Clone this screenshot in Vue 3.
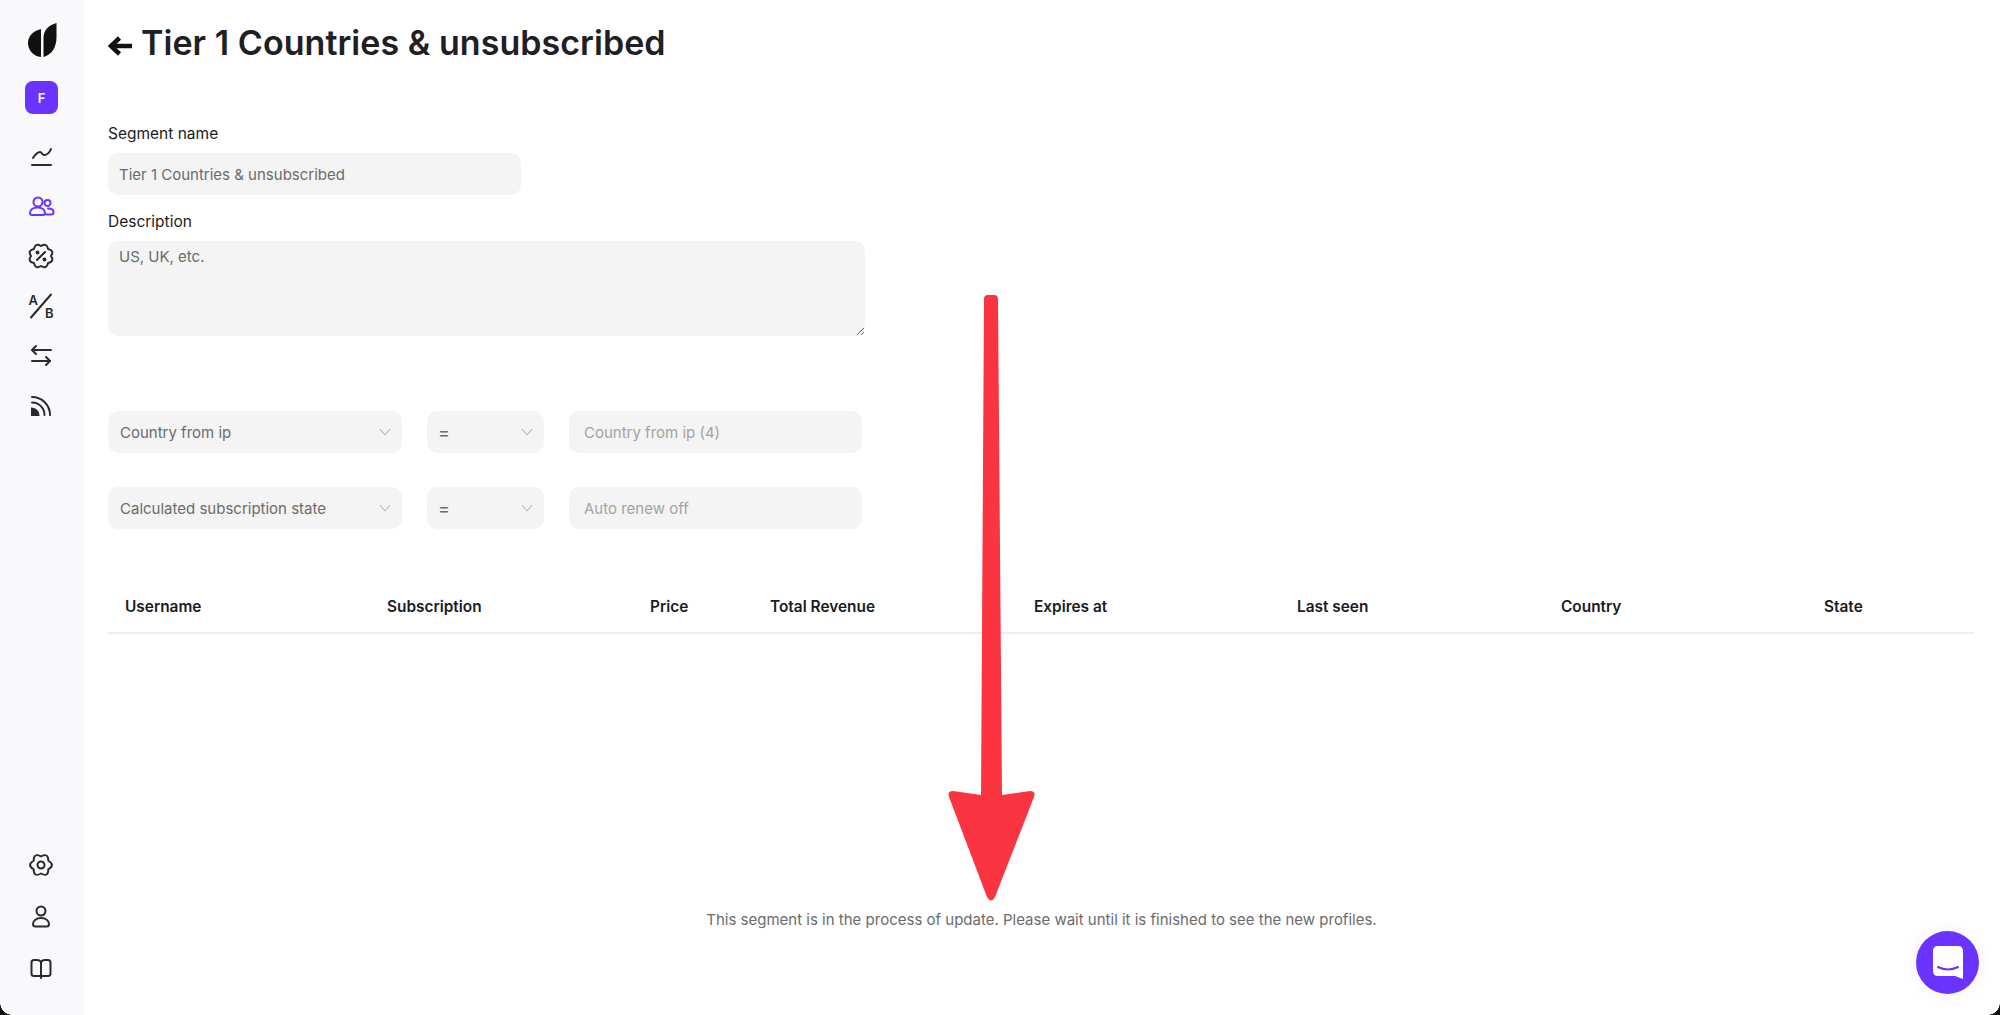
<template>
  <div class="app">
    <aside class="sidebar">
      <svg class="logo" width="29" height="34" viewBox="0 0 29 34">
        <path d="M13 6C5 8 0 13 0 20c0 7 5 13 13 14z" fill="#111" />
        <path d="M15.500 34V15C15.500 7 21 2 28.500 0v14c0 11-5.500 18-13 20z" fill="#111" />
      </svg>
      <div class="badge">F</div>
      <nav class="nav">
        <a v-for="item in topNav" :key="item.name" class="nav__item" :class="{ 'nav__item--active': item.active }">
          <svg width="28" height="28" viewBox="0 0 28 28" fill="none" stroke="currentColor" stroke-width="2" stroke-linecap="round" stroke-linejoin="round">
            <path v-for="(d, i) in item.paths" :key="i" :d="d" />
            <path v-if="item.solid" :d="item.solid" fill="currentColor" stroke="none" />
            <text v-for="t in item.labels" :key="t.c" :x="t.x" :y="t.y" class="nav__letter">{{ t.c }}</text>
          </svg>
        </a>
      </nav>
      <nav class="nav nav--bottom">
        <a v-for="item in bottomNav" :key="item.name" class="nav__item">
          <svg width="28" height="28" viewBox="0 0 28 28" fill="none" stroke="currentColor" stroke-width="2" stroke-linecap="round" stroke-linejoin="round">
            <path v-for="(d, i) in item.paths" :key="i" :d="d" />
          </svg>
        </a>
      </nav>
    </aside>

    <main class="main">
      <h1 class="title">
        <svg class="title__back" width="24" height="20" viewBox="0 0 24 20" fill="none" stroke="#111" stroke-width="4.500" stroke-linejoin="miter">
          <path d="M11.500 2L3 10l8.500 8" />
          <path d="M3.500 10H24" />
        </svg>
        <span>Tier 1 Countries &amp; unsubscribed</span>
      </h1>

      <label class="label label--name">Segment name</label>
      <input class="field field--name" value="Tier 1 Countries & unsubscribed" readonly />

      <label class="label label--desc">Description</label>
      <textarea class="field field--desc" readonly>US, UK, etc.</textarea>

      <div class="rules">
        <div v-for="rule in rules" :key="rule.field" class="rule">
          <div class="field field--select rule__field">
            <span>{{ rule.field }}</span>
            <svg width="12" height="8" viewBox="0 0 12 8" fill="none" stroke="#a9a9a9" stroke-width="1"><path d="M1 1l5 6 5-6" /></svg>
          </div>
          <div class="field field--select rule__op">
            <span class="rule__eq">=</span>
            <svg width="12" height="8" viewBox="0 0 12 8" fill="none" stroke="#a9a9a9" stroke-width="1"><path d="M1 1l5 6 5-6" /></svg>
          </div>
          <div class="field rule__value">{{ rule.value }}</div>
        </div>
      </div>

      <div class="table-head">
        <span v-for="col in columns" :key="col">{{ col }}</span>
      </div>

      <p class="message">This segment is in the process of update. Please wait until it is finished to see the new profiles.</p>
    </main>

    <!-- red annotation arrow drawn over the page -->
    <svg class="arrow" width="90" height="610" viewBox="0 0 90 610">
      <path
        d="M36 5Q36 1 40 1H46Q50 1 50 5L54 501L82 497Q88 497 86 503L47 603Q43 610 39 603L1 503Q-1 497 5 497L33 501Z"
        fill="#fb3441"
      />
    </svg>

    <button class="chat">
      <svg width="30" height="33" viewBox="0 0 30 33">
        <path d="M5 0H25Q30 0 30 5V33L22 30H5Q0 30 0 25V5Q0 0 5 0Z" fill="#fff" />
        <path d="M5 21Q15 26 25 21" fill="none" stroke="#6b33ff" stroke-width="2" stroke-linecap="round" />
      </svg>
    </button>

    <i class="corner corner--left" />
    <i class="corner corner--right" />
  </div>
</template>

<script setup>
// scalloped outline, used for the offers badge and the settings gear
function scallop(n, valley, ctrl, cx = 14, cy = 14) {
  const pt = (r, a) => `${(cx + r * Math.cos(a)).toFixed(2)} ${(cy + r * Math.sin(a)).toFixed(2)}`
  const step = (Math.PI * 2) / n
  let d = `M${pt(valley, -Math.PI / 2)}`
  for (let i = 0; i < n; i++) {
    const a = -Math.PI / 2 + i * step
    d += `Q${pt(ctrl, a + step / 2)} ${pt(valley, a + step)}`
  }
  return d + 'Z'
}

const topNav = [
  { name: 'analytics', paths: ['M5 23H24', 'M6 16C8 13 11 10 13 10S15 13 17 13 22 12 24 7'] },
  {
    name: 'users',
    active: true,
    paths: [
      'M11 14.500a4.500 4.500 0 1 0 0-9 4.500 4.500 0 0 0 0 9z',
      'M3 21c0-3.500 3.500-5.500 7.500-5.500s7.500 2 7.500 5.500c0 1.500-1 2-2 2H5c-1 0-2-.5-2-2z',
      'M20.500 14a3 3 0 1 0 0-6 3 3 0 0 0 0 6z',
      'M21 16.500c3 0 5.500 1 5.500 3.500 0 1.500-1 2.500-2 2.500H19',
    ],
  },
  {
    name: 'offers',
    paths: [scallop(8, 10, 14.800), 'M18 10l-8 8'],
    solid: 'M10.500 8.500a2 2 0 1 0 0 4 2 2 0 0 0 0-4zM17.500 15.500a2 2 0 1 0 0 4 2 2 0 0 0 0-4z',
  },
  {
    name: 'ab tests',
    paths: ['M24 2.500L4 25.500'],
    labels: [{ c: 'A', x: 1.500, y: 12.500 }, { c: 'B', x: 18, y: 26 }],
  },
  { name: 'transfers', paths: ['M9 4L5 8l4 4', 'M5.500 8H24', 'M19 15l4 4-4 4', 'M23 19H5'] },
  {
    name: 'feeds',
    paths: ['M5 5c10 0 18 8 18 18', 'M5 10.500c7 0 12.500 5.500 12.500 12.500'],
    solid: 'M4 15.500c5 0 8.500 3.500 8.500 8.500H4z',
  },
]

const bottomNav = [
  {
    name: 'settings',
    paths: ['M14 17.500a3.500 3.500 0 1 0 0-7 3.500 3.500 0 0 0 0 7z', scallop(6, 8.500, 14.600)],
  },
  {
    name: 'profile',
    paths: [
      'M14 12.500a4.500 4.500 0 1 0 0-9 4.500 4.500 0 0 0 0 9z',
      'M6 21c0-3.500 3.500-6 8-6s8 2.500 8 6c0 2-1.500 2.500-2.500 2.500h-11C7.500 23.500 6 23 6 21z',
    ],
  },
  {
    name: 'docs',
    paths: [
      'M14 7c-1-1.500-2.500-2-4-2H7C5 5 4.500 6 4.500 7.500v11C4.500 20 5 21 7 21h14c2 0 2.500-1 2.500-2.500v-11C23.500 6 23 5 21 5h-3c-1.500 0-3 .5-4 2z',
      'M14 7v16',
    ],
  },
]

const rules = [
  { field: 'Country from ip', value: 'Country from ip (4)' },
  { field: 'Calculated subscription state', value: 'Auto renew off' },
]

const columns = ['Username', 'Subscription', 'Price', 'Total Revenue', 'Expires at', 'Last seen', 'Country', 'State']
</script>

<style>
html, body { margin: 0; background: #fff; }
</style>

<style scoped>
.app {
  position: relative;
  display: flex;
  width: 2000px;
  height: 1015px;
  overflow: hidden;
  font-family: Inter, "Noto Sans", sans-serif;
  background: #fff;
}

.sidebar {
  flex: 0 0 84px;
  display: flex;
  flex-direction: column;
  align-items: center;
  background: #f9f9fc;
}
.logo { margin: 23px 0 0 0; }
.badge {
  width: 33px;
  height: 33px;
  margin: 24px 0 0 -1px;
  border-radius: 8px;
  background: #6b33ff;
  color: #fff;
  font-size: 13px;
  font-weight: 600;
  display: flex;
  align-items: center;
  justify-content: center;
}
.nav {
  display: flex;
  flex-direction: column;
  gap: 22px;
  margin: 28px 0 0 -2px;
}
.nav--bottom {
  margin-top: auto;
  margin-bottom: 32px;
  gap: 24px;
}
.nav__item {
  display: block;
  height: 28px;
  color: #2a2a2e;
}
.nav__item svg { display: block; }
.nav__item--active { color: #6b33ff; }
.nav__letter {
  font-size: 13px;
  font-weight: 600;
  fill: currentColor;
  stroke: none;
}

.main {
  flex: 1;
  padding: 22px 25px 0 24px;
  min-width: 0;
}
.title {
  display: flex;
  align-items: center;
  gap: 9px;
  margin: 0;
  font-size: 34px;
  line-height: 42px;
  font-weight: 600;
  letter-spacing: 0.05px;
  color: #202024;
}
.title__back { margin-top: 5px; }

.label {
  display: block;
  font-size: 15.500px;
  line-height: 20px;
  color: #1c1c20;
}
.label--name { margin-top: 60px; }
.label--desc { margin-top: 17px; }

.field {
  display: block;
  box-sizing: border-box;
  border: none;
  outline: none;
  border-radius: 10px;
  background: #f4f4f4;
  font-family: inherit;
  font-size: 15px;
  color: #6b6b6b;
}
.field--name {
  width: 413px;
  height: 42px;
  margin-top: 9px;
  padding: 0 11px;
}
.field--desc {
  width: 757px;
  height: 95px;
  margin-top: 9px;
  padding: 6px 11px;
  line-height: 20px;
}

.rules {
  display: flex;
  flex-direction: column;
  gap: 34px;
  margin-top: 75px;
}
.rule {
  display: flex;
  gap: 25px;
}
.rule__field,
.rule__op,
.rule__value {
  height: 42px;
  display: flex;
  align-items: center;
}
.field--select {
  justify-content: space-between;
  padding: 0 11px 0 12px;
}
.rule__field { width: 294px; box-sizing: border-box; }
.rule__op { width: 117px; box-sizing: border-box; }
.rule__eq { font-size: 18px; margin-left: -1px; }
.rule__value {
  width: 293px;
  padding: 0 15px;
  color: #a3a3a3;
}

.table-head {
  display: grid;
  grid-template-columns: 262px 263px 120px 264px 263px 264px 263px 1fr;
  margin-top: 67px;
  padding: 0 0 14px 17px;
  border-bottom: 2px solid #eeeeee;
  font-size: 15.400px;
  line-height: 22px;
  font-weight: 600;
  color: #1b1b1f;
}

.message {
  margin: 275px 0 0;
  text-align: center;
  font-size: 15px;
  line-height: 22px;
  color: #6b6b6b;
}

.arrow {
  position: absolute;
  left: 948px;
  top: 294px;
}

.chat {
  position: absolute;
  left: 1916px;
  top: 931px;
  width: 63px;
  height: 63px;
  padding: 0;
  border: none;
  border-radius: 50%;
  background: #6b33ff;
  box-shadow: 0 1px 20px rgba(0, 0, 0, 0.06);
  display: flex;
  align-items: center;
  justify-content: center;
}

.corner {
  position: absolute;
  bottom: 0;
  width: 12px;
  height: 12px;
  background: #111;
}
.corner--left { left: 0; -webkit-mask: radial-gradient(circle at 100% 0, transparent 11.500px, #000 12px); mask: radial-gradient(circle at 100% 0, transparent 11.500px, #000 12px); }
.corner--right { right: 0; -webkit-mask: radial-gradient(circle at 0 0, transparent 11.500px, #000 12px); mask: radial-gradient(circle at 0 0, transparent 11.500px, #000 12px); }
</style>
